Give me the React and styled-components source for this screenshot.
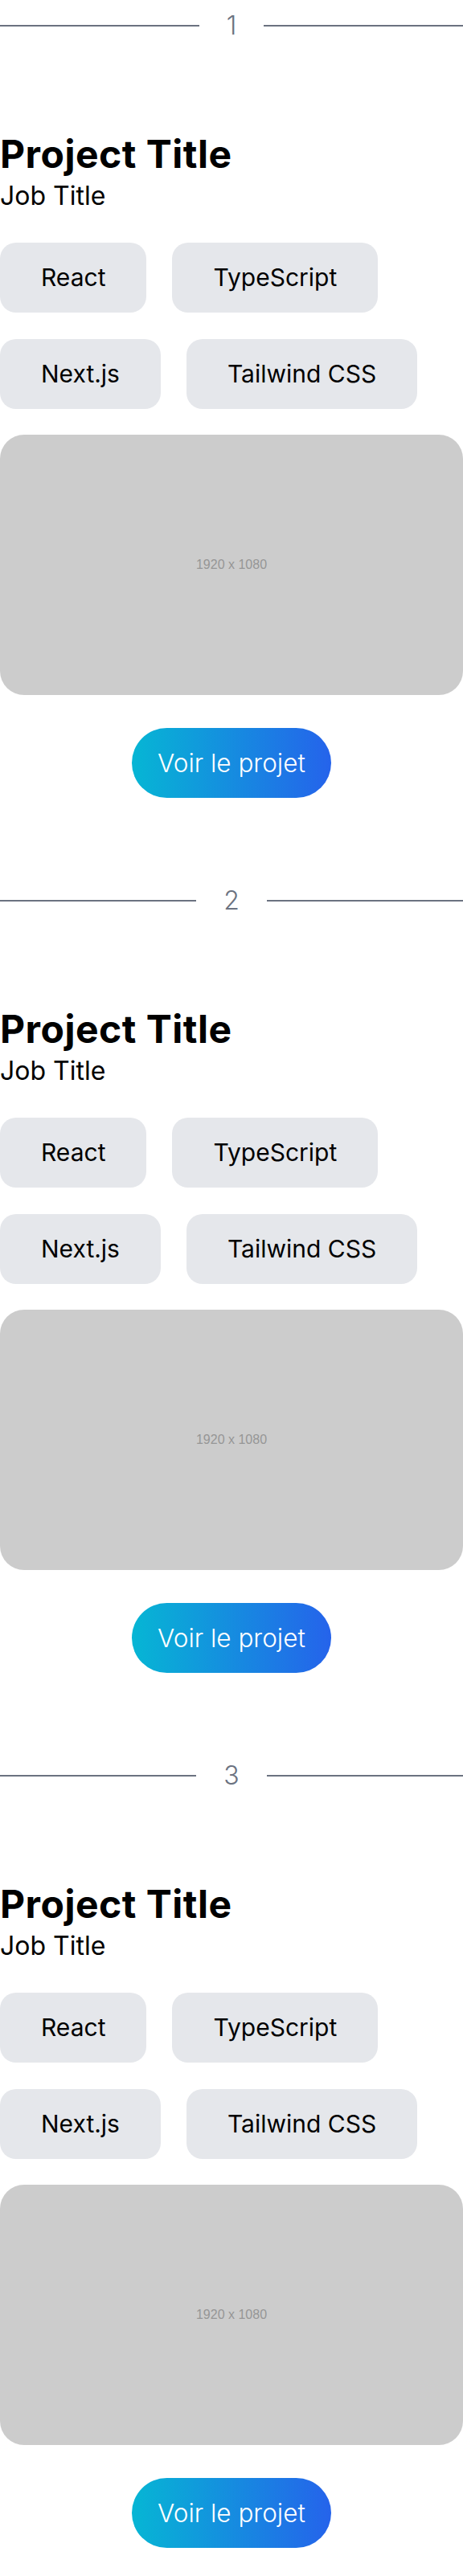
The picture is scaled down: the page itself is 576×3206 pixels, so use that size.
import React from "react";
import styled, { createGlobalStyle } from "styled-components";

const Global = createGlobalStyle`
  html, body { margin: 0; padding: 0; background: #ffffff; }
  body { font-family: Inter, "Noto Sans", sans-serif; color: #000; }
  * { box-sizing: border-box; }
`;

const Page = styled.main`
  display: flex;
  flex-direction: column;
  gap: 96px;
  padding-bottom: 32px;
  width: 576px;
`;

const Section = styled.section`
  display: flex;
  flex-direction: column;
`;

const Divider = styled.div`
  display: flex;
  align-items: center;
  height: 64px;
`;

const Rule = styled.span`
  flex: 1;
  height: 2px;
  background: #6b7280;
`;

const Index = styled.span`
  padding: 0 34px;
  font-family: Inter, sans-serif;
  font-size: 32px;
  line-height: 40px;
  font-weight: 300;
  color: #6b7280;
`;

const Title = styled.h2`
  margin: 104px 0 0;
  font-family: Inter, sans-serif;
  font-size: 48px;
  line-height: 48px;
  font-weight: 700;
  letter-spacing: 0.5px;
  color: #000;
`;

const Role = styled.p`
  margin: 8px 0 0;
  font-family: Inter, sans-serif;
  font-size: 32px;
  line-height: 40px;
  font-weight: 400;
  color: #000;
`;

const Tags = styled.ul`
  list-style: none;
  margin: 38px 0 0;
  padding: 0;
  display: flex;
  flex-wrap: wrap;
  gap: 33px 32px;
`;

const Tag = styled.li`
  padding: 25px 51px;
  border-radius: 20px;
  background: #e5e7eb;
  font-family: Inter, sans-serif;
  font-size: 30px;
  line-height: 37px;
  color: #000;
`;

const Shot = styled.div`
  margin-top: 32px;
  width: 100%;
  aspect-ratio: 16 / 9;
  border-radius: 30px;
  background: #cccccc;
  display: flex;
  align-items: center;
  justify-content: center;
  font-family: "Liberation Sans", Arial, sans-serif;
  font-size: 16px;
  color: #969696;
`;

const Cta = styled.a`
  align-self: center;
  margin-top: 41px;
  padding: 25px 32px;
  border-radius: 9999px;
  background: linear-gradient(90deg, #06b6d4 0%, #2563eb 100%);
  font-family: Inter, sans-serif;
  font-size: 31.5px;
  line-height: 37px;
  font-weight: 300;
  color: #ffffff;
  text-decoration: none;
  cursor: pointer;
`;

const projects = [1, 2, 3].map((n) => ({
  n,
  title: "Project Title",
  role: "Job Title",
  tags: ["React", "TypeScript", "Next.js", "Tailwind CSS"],
}));

export default function App() {
  return (
    <>
      <Global />
      <Page>
        {projects.map((p) => (
          <Section key={p.n}>
            <Divider>
              <Rule />
              <Index>{p.n}</Index>
              <Rule />
            </Divider>
            <Title>{p.title}</Title>
            <Role>{p.role}</Role>
            <Tags>
              {p.tags.map((t) => (
                <Tag key={t}>{t}</Tag>
              ))}
            </Tags>
            <Shot>1920 x 1080</Shot>
            <Cta>Voir le projet</Cta>
          </Section>
        ))}
      </Page>
    </>
  );
}
